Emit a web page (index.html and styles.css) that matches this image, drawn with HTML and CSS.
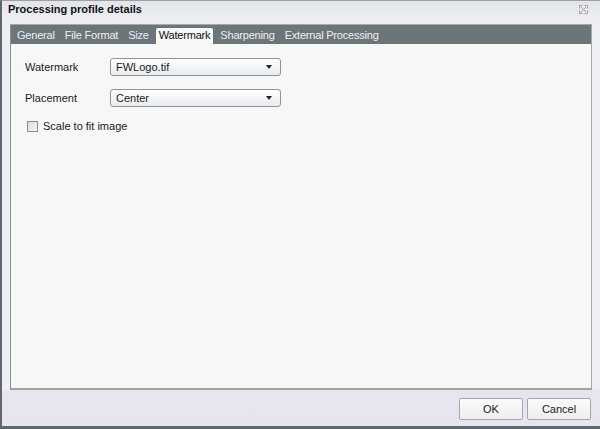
FILE: index.html
```html
<!DOCTYPE html>
<html>
<head>
<meta charset="utf-8">
<link rel="stylesheet" href="styles.css">
</head>
<body>
<div class="dialog">
  <div class="titlebar">
    <span class="title">Processing profile details</span>
    <svg class="close" width="9" height="9" viewBox="0 0 9 9">
      <path d="M0.5 0.5h3M0.5 0.5v3M8.5 0.5h-3M8.5 0.5v3M0.5 8.5h3M0.5 8.5v-3M8.5 8.5h-3M8.5 8.5v-3M2 2l5 5M7 2l-5 5" stroke="#9aa0a8" stroke-width="1" fill="none"/>
    </svg>
  </div>
  <div class="main">
    <div class="panel">
      <div class="tabs">
        <span class="tab">General</span>
        <span class="tab">File Format</span>
        <span class="tab">Size</span>
        <span class="tab active">Watermark</span>
        <span class="tab">Sharpening</span>
        <span class="tab">External Processing</span>
      </div>
      <div class="content">
        <div class="row">
          <span class="label">Watermark</span>
          <div class="select"><span>FWLogo.tif</span><span class="arrow"></span></div>
        </div>
        <div class="row">
          <span class="label">Placement</span>
          <div class="select"><span>Center</span><span class="arrow"></span></div>
        </div>
        <label class="check"><span class="box"></span><span>Scale to fit image</span></label>
      </div>
    </div>
  </div>
  <div class="footer">
    <button class="btn">OK</button>
    <button class="btn">Cancel</button>
  </div>
</div>
</body>
</html>
```
FILE: styles.css
```css
html, body { margin: 0; padding: 0; }
body {
  font-family: "Liberation Sans", Arial, sans-serif;
  font-size: 11px;
  color: #1a1a1a;
  width: 600px;
  height: 429px;
  overflow: hidden;
}
.dialog {
  width: 600px;
  height: 429px;
  box-sizing: border-box;
  border-left: 2px solid #5f666d;
  border-bottom: 3px solid #5f666d;
  border-top: 1px solid #9aa0a6;
  background: linear-gradient(#e9ebf0, #e6e5ee);
  display: flex;
  flex-direction: column;
}
.titlebar {
  height: 16px;
  display: flex;
  align-items: center;
  justify-content: space-between;
  padding: 0 12px 1px 6px;
  background: linear-gradient(#e2e4ea, #eceef2);
}
.title {
  font-weight: bold;
  font-size: 11px;
  color: #111;
}
.close { display: block; }
.main {
  flex: 1;
  display: flex;
  padding: 6px 8px 0 8px;
  background: #eeeff3;
}
.panel {
  flex: 1;
  display: flex;
  flex-direction: column;
  border: 1px solid #a5a9ad;
  border-left-color: #8c9095;
  border-bottom: 2px solid #9ea2a6;
  background: #f7f7f7;
}
.tabs {
  height: 19px;
  background: #6c757a;
  display: flex;
  align-items: flex-end;
  padding-left: 3px;
  letter-spacing: -0.2px;
}
.tab {
  color: #eef0f2;
  padding: 0 3px;
  height: 16px;
  line-height: 15px;
  margin-right: 4px;
}
.tab.active {
  background: #f7f7f7;
  color: #111;
  border-radius: 2px 2px 0 0;
}
.content {
  flex: 1;
  padding: 14px 0 0 14px;
  display: flex;
  flex-direction: column;
}
.row {
  display: flex;
  align-items: center;
  height: 18px;
  margin-bottom: 13px;
}
.label {
  width: 85px;
}
.select {
  width: 171px;
  height: 18px;
  box-sizing: border-box;
  border: 1px solid #8d959c;
  border-radius: 3px;
  background: linear-gradient(#ffffff, #f4f5f7 50%, #e9ebee);
  display: flex;
  align-items: center;
  justify-content: space-between;
  padding: 0 8px 0 5px;
}
.arrow {
  width: 0;
  height: 0;
  border-left: 3px solid transparent;
  border-right: 3px solid transparent;
  border-top: 4px solid #222;
}
.check {
  display: flex;
  align-items: center;
  gap: 5px;
  margin-left: 2px;
  margin-top: 0;
}
.box {
  width: 9px;
  height: 9px;
  border: 1px solid #8a8f95;
  background: linear-gradient(135deg, #d8dadd, #f6f6f6);
}
.footer {
  height: 35px;
  display: flex;
  justify-content: flex-end;
  align-items: center;
  gap: 4px;
  padding-right: 9px;
  padding-top: 1px;
}
.btn {
  width: 64px;
  height: 22px;
  font-family: "Liberation Sans", Arial, sans-serif;
  font-size: 11px;
  color: #222;
  border: 1px solid #a3a7ab;
  border-radius: 2px;
  background: linear-gradient(#fbfbfb, #eceef0);
  padding: 0;
}
```
